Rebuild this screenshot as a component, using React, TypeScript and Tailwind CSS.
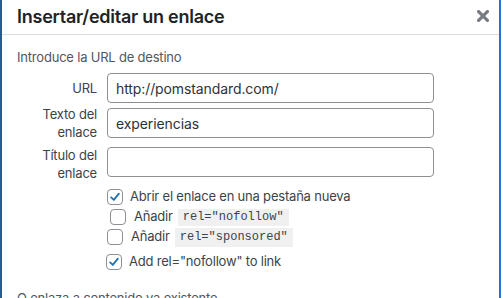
import React from "react";

function Check({ checked }: { checked: boolean }) {
  return (
    <span className="flex h-[16px] w-[16px] shrink-0 items-center justify-center rounded-[4px] border border-[#8c8f94] bg-white">
      {checked && (
        <svg width="14" height="14" viewBox="0 0 20 20">
          <path d="M4.5 10.5 L8.3 14.2 L15.5 5.2" fill="none" stroke="#2271b1" strokeWidth="2.6" strokeLinecap="round" strokeLinejoin="round" />
        </svg>
      )}
    </span>
  );
}

export default function App() {
  return (
    <div
      className="relative h-[298px] w-[501px] overflow-hidden border-l-2 border-r-2 border-l-[#1f5c99] border-r-[#2271d8] bg-white text-[13px] tracking-[-0.2px] text-[#3c434a]"
      style={{ fontFamily: "Inter, 'Noto Sans', sans-serif" }}
    >
      <div className="flex h-[35px] items-start justify-between border-b border-[#dcdcde] pl-[15px] pr-[10px]">
        <div className="mt-[5px] text-[18px] font-semibold leading-[24px] tracking-[-0.25px] text-[#1d2327]">Insertar/editar un enlace</div>
        <svg className="mt-[10px]" width="12" height="12" viewBox="0 0 12 12">
          <path d="M1.6 1.6 L10.4 10.4 M10.4 1.6 L1.6 10.4" stroke="#787c82" strokeWidth="3.2" strokeLinecap="square" />
        </svg>
      </div>
      <div className="pl-[15px]">
        <div className="mt-[13px] leading-[18px] text-[#50575e]">Introduce la URL de destino</div>
        <div className="mt-[7px] flex items-center">
          <div className="w-[80px] text-right leading-[18px]">URL</div>
          <div className="ml-[10px] flex h-[30px] w-[327px] items-center rounded-[4px] border border-[#8c8f94] px-[8px] text-[14px] tracking-[-0.1px] text-[#2c3338]">http://pomstandard.com/</div>
        </div>
        <div className="mt-[2px] flex items-start">
          <div className="w-[80px] text-right leading-[18px]">Texto del<br />enlace</div>
          <div className="ml-[10px] mt-[3px] flex h-[30px] w-[327px] items-center rounded-[4px] border border-[#8c8f94] px-[8px] text-[14px] tracking-[-0.1px] text-[#2c3338]">experiencias</div>
        </div>
        <div className="mt-[5px] flex items-start">
          <div className="w-[80px] text-right leading-[18px]">Título del<br />enlace</div>
          <div className="ml-[10px] mt-[1px] flex h-[30px] w-[327px] items-center rounded-[4px] border border-[#8c8f94] px-[8px] text-[14px] text-[#2c3338]"></div>
        </div>
        <div className="ml-[90px] mt-[7px] flex flex-col">
          <label className="flex h-[16px] items-center gap-[7px]">
            <Check checked />
            <span>Abrir el enlace en una pestaña nueva</span>
          </label>
          <label className="ml-[3px] mt-[4px] flex h-[16px] items-center">
            <Check checked={false} />
            <span className="ml-[8px]">Añadir</span>
            <code className="ml-[5px] bg-[#f0f0f1] px-[5px] py-[1px] text-[12px] leading-[15px] tracking-normal text-[#3c434a]" style={{ fontFamily: "'Liberation Mono', monospace" }}>rel="nofollow"</code>
          </label>
          <label className="mt-[4px] flex h-[16px] items-center">
            <Check checked={false} />
            <span className="ml-[8px]">Añadir</span>
            <code className="ml-[5px] bg-[#f0f0f1] px-[5px] py-[2px] text-[12px] leading-[15px] tracking-normal text-[#3c434a]" style={{ fontFamily: "'Liberation Mono', monospace" }}>rel="sponsored"</code>
          </label>
          <label className="-ml-[1px] mt-[9px] flex h-[16px] items-center gap-[7px]">
            <Check checked />
            <span>Add rel="nofollow" to link</span>
          </label>
        </div>
        <div className="mt-[19px] leading-[18px] text-[#50575e]">O enlaza a contenido ya existente</div>
      </div>
    </div>
  );
}
